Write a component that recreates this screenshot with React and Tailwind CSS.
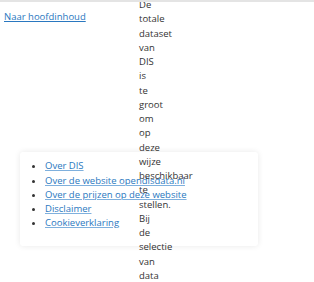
export default function App() {
  const words = "De totale dataset van DIS is te groot om op deze wijze beschikbaar te stellen. Bij de selectie van data".split(" ");
  const links = [
    "Over DIS",
    "Over de website opendisdata.nl",
    "Over de prijzen op deze website",
    "Disclaimer",
    "Cookieverklaring",
  ];
  return (
    <div className="relative w-[314px] h-[282px] overflow-hidden bg-white text-[9.5px] leading-[1.5] text-[#333]" style={{ fontFamily: '"Open Sans", sans-serif' }}>
      <div className="pt-[10px] pl-[4px]">
        <a href="#" className="text-[#2a78c0] underline">Naar hoofdinhoud</a>
      </div>
      <div className="mt-[128px] ml-[20px] w-[238px] rounded-[3px] bg-white shadow-[0_0_6px_rgba(0,0,0,0.09)] pt-[7px] pb-[15px] pl-[25px]">
        <ul className="list-disc">
          {links.map((l) => (
            <li key={l}>
              <a href="#" className="text-[#2a78c0] underline decoration-[#7fb0dd]">{l}</a>
            </li>
          ))}
        </ul>
      </div>
      <div className="absolute left-[139px] top-[-2px] w-0 text-[#333]">
        {words.map((w, i) => (
          <div key={i} className="whitespace-nowrap">{w}</div>
        ))}
      </div>
      <div className="absolute left-0 top-0 w-full h-[2px] bg-[#e4e4e4]" />
    </div>
  );
}
